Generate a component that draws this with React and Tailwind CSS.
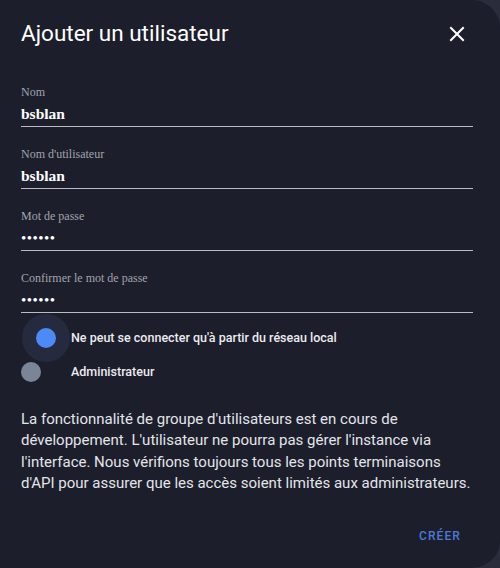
import React from "react";

function Field({ label, value, password }) {
  return (
    <div className="mt-[19px] first:mt-0 border-b border-[#b9bbc6] pb-[2px]">
      <div className="h-[16px] leading-[16px] text-[12px] text-[#a2a4ae]" style={{ fontFamily: '"Liberation Serif", serif' }}>
        {label}
      </div>
      <div
        className={"mt-[4px] h-[20px] leading-[20px] text-white " + (password ? "text-[15px] tracking-[0.5px]" : "text-[15.5px] font-bold")}
        style={{ fontFamily: '"Liberation Serif", serif' }}
      >
        {value}
      </div>
    </div>
  );
}

export default function App() {
  return (
    <div className="w-[500px] h-[568px] bg-[#2a2c3b] overflow-hidden">
      <div
        className="relative w-[500px] h-[568px] bg-[#1c1e2b] rounded-tr-[28px] rounded-br-[28px] pl-[21px] pr-[27px]"
        style={{ fontFamily: 'Roboto, "Liberation Sans", sans-serif' }}
      >
        <div className="flex items-center justify-between pt-[19px] h-[47px]">
          <div className="text-[22.5px] leading-[28px] text-white">Ajouter un utilisateur</div>
          <svg width="16" height="16" viewBox="0 0 16 16" className="mr-[8px] mt-[2px]">
            <path d="M2 2 L14 14 M14 2 L2 14" stroke="#ffffff" strokeWidth="2" strokeLinecap="square" />
          </svg>
        </div>

        <div className="mt-[37px] flex flex-col">
          <Field label="Nom" value="bsblan" />
          <Field label="Nom d'utilisateur" value="bsblan" />
          <Field label="Mot de passe" value="••••••" password />
          <Field label="Confirmer le mot de passe" value="••••••" password />
        </div>

        <div className="mt-[8px] flex flex-col">
          <div className="flex items-center h-[34px]">
            <div className="relative w-[50px] h-[34px]">
              <div className="absolute left-[1px] top-[-7px] w-[48px] h-[48px] rounded-full bg-[#262a3e]" />
              <div className="absolute left-[15px] top-[7px] w-[20px] h-[20px] rounded-full bg-[#4d8af6]" />
            </div>
            <span className="text-[12.5px] font-medium text-[#ececf0]">
              Ne peut se connecter qu'à partir du réseau local
            </span>
          </div>
          <div className="flex items-center h-[34px]">
            <div className="relative w-[50px] h-[34px]">
              <div className="absolute left-0 top-[7px] w-[20px] h-[20px] rounded-full bg-[#7b8598]" />
            </div>
            <span className="text-[12.5px] font-medium text-[#ececf0]">Administrateur</span>
          </div>
        </div>

        <p className="mt-[20px] text-[15px] leading-[21.33px] text-[#e4e5ea]">
          La fonctionnalité de groupe d'utilisateurs est en cours de développement. L'utilisateur ne pourra pas gérer l'instance via l'interface. Nous vérifions toujours tous les points terminaisons d'API pour assurer que les accès soient limités aux administrateurs.
        </p>

        <div className="flex justify-end mt-[24px]">
          <button className="px-[12px] h-[36px] text-[12px] font-medium tracking-[1.1px] text-[#4c7ad2]">
            CRÉER
          </button>
        </div>
      </div>
    </div>
  );
}
